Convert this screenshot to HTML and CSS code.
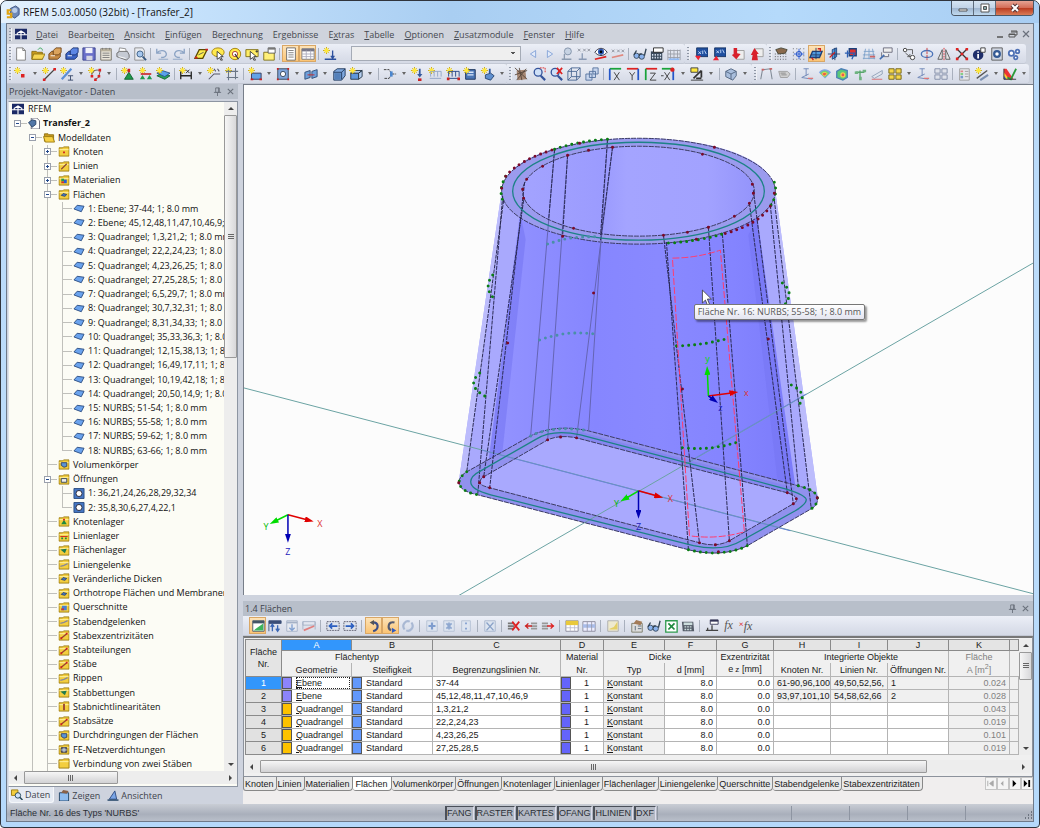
FILE: index.html
```html
<!DOCTYPE html>
<html lang="de">
<head>
<meta charset="utf-8">
<title>RFEM 5.03.0050 (32bit) - [Transfer_2]</title>
<link rel="stylesheet" href="styles.css">
</head>
<body>

<!-- icon set -->
<svg class="defs" aria-hidden="true">
<defs>
<symbol id="spark" viewBox="0 0 16 16"><path d="M4 0v8M0 4h8M1.500 1.500l5 5M6.500 1.500l-5 5" stroke="#c9a400"/><circle cx="4" cy="4" r="2.500" fill="#ffe83a"/></symbol>
<symbol id="logo" viewBox="0 0 16 16"><path fill="#1b2a66" d="M0 1h16v14H0z"/><path d="M0 9h16M8 3v12M3 9V7l5-3 5 3v2" stroke="#fff" stroke-width="1.500"/></symbol>
<symbol id="app" viewBox="0 0 16 16"><path d="M5 4l6-3 4 3v7l-5 4-5-3z" fill="#6f89b8" stroke="#3b4f7d"/><circle cx="10" cy="6" r="3" fill="#b9cbe8"/><path d="M6 6H2v4h4v4H1" stroke="#e0a414" stroke-width="2.500"/></symbol>
<symbol id="new" viewBox="0 0 16 16"><path d="M3 1h7l3 3v11H3z" fill="#fff" stroke="#777"/><path d="M10 1v3h3" stroke="#777"/></symbol>
<symbol id="open" viewBox="0 0 16 16"><path d="M1 5h5l1 1h6v8H1z" fill="#c99b1e" stroke="#866a10"/><path d="M3 8h13l-3 6H1z" fill="#f6d655" stroke="#8e7215"/><path d="M8 3c2-3 5-2 5 1" stroke="#2aa04a"/></symbol>
<symbol id="box" viewBox="0 0 16 16"><path d="M1 8l3-3h10v6l-3 3H1z" fill="#c58a45" stroke="#6b4015"/><path d="M6 4l3-3h6v5l-3 3H6z" fill="#dba35c" stroke="#6b4015"/><path d="M3 10h5" stroke="#fff"/></symbol>
<symbol id="boxblue" viewBox="0 0 16 16"><path d="M1 8l3-3h10v6l-3 3H1z" fill="#3b63c4" stroke="#152d6b"/><path d="M6 4l3-3h6v5l-3 3H6z" fill="#5c86e4" stroke="#152d6b"/><path d="M3 10h5" stroke="#fff"/></symbol>
<symbol id="save" viewBox="0 0 16 16"><path d="M1 1h14v14H1z" fill="#6a6fc9" stroke="#39408a"/><path d="M4 1h8v6H4z" fill="#f1f1fa"/><path d="M5 10h7v5H5z" fill="#d5d5e2"/></symbol>
<symbol id="report" viewBox="0 0 16 16"><path d="M2 2h12v13H2z" fill="#e9e5da" stroke="#6e6a60"/><path d="M2 2h12v3H2z" fill="#b8b09c"/><path d="M4 7h8M4 9.500h8M4 12h8M4 1v2M8 1v2M12 1v2" stroke="#777"/></symbol>
<symbol id="print" viewBox="0 0 16 16"><path d="M4 1l7 1 1 5H3z" fill="#fff" stroke="#888"/><path d="M1 7l3-2h9l2 4v3l-3 3-11-4z" fill="#c5cad3" stroke="#666"/><path d="M3 11l8 2" stroke="#fff"/></symbol>
<symbol id="preview" viewBox="0 0 16 16"><path d="M2 1h9l2 3v11H2z" fill="#e9ebf0" stroke="#888"/><circle cx="8" cy="8" r="3.500" fill="#a7c8ef" stroke="#35577f"/><path d="M11 11l4 4" stroke="#35577f" stroke-width="2"/></symbol>
<symbol id="undo" viewBox="0 0 16 16"><path d="M2 2v5h5M2 7c3-4 10-4 11 1 0 4-4 4-6 4" stroke="#8ba3c4" stroke-width="1.500"/><path d="M4 14h11" stroke="#8ba3c4"/></symbol>
<symbol id="redo" viewBox="0 0 16 16"><path d="M14 2v5H9M14 7C11 3 4 3 3 8c0 4 4 4 6 4" stroke="#8ba3c4" stroke-width="1.500"/><path d="M1 14h11" stroke="#8ba3c4"/></symbol>
<symbol id="sel-para" viewBox="0 0 16 16"><path d="M6 3h9l-5 10H1z" fill="#ffee4d" stroke="#5b4a00" stroke-width="1.500"/><path d="M5 9l6-3" stroke="#555"/><path d="M1 12h3M13 3h3" stroke="#c22" stroke-width="2"/></symbol>
<symbol id="sel-oval" viewBox="0 0 16 16"><ellipse cx="8" cy="6" rx="7" ry="5" fill="#ffe94d" stroke="#a07b00"/><path d="M7 5l7 6-3 0 2 4-2 0-1-3-3 2z" fill="#fff" stroke="#333"/></symbol>
<symbol id="sel-ring" viewBox="0 0 16 16"><circle cx="8" cy="8" r="6.500" fill="#ffe94d" stroke="#a07b00"/><circle cx="8" cy="8" r="3" fill="#fff" stroke="#a33"/><path d="M8 8l4 6" stroke="#333" stroke-width="1.500"/></symbol>
<symbol id="sel-box" viewBox="0 0 16 16"><path d="M1 3h14v8H1z" fill="#ffee66" stroke="#7c6b12"/><path d="M6 5l7 6-3 0 2 4-2 0-1-3-3 2z" fill="#fff" stroke="#333"/><path d="M12 5h3M13.500 3.500v3" stroke="#333"/></symbol>
<symbol id="sel-tab" viewBox="0 0 16 16"><path d="M2 6h12v9H2z" fill="#fff07a" stroke="#7c6b12"/><path d="M7 1h8v6H7z" fill="#fff" stroke="#555"/><path d="M7 1h8v2H7z" fill="#777"/></symbol>
<symbol id="list" viewBox="0 0 16 16"><path d="M3 1h10v14H3z" fill="#fff" stroke="#666"/><path d="M5 4h6M5 6.500h6M5 9h6M5 11.500h6" stroke="#777"/></symbol>
<symbol id="grid" viewBox="0 0 16 16"><path d="M1 2h14v12H1z" fill="#fff" stroke="#777"/><path d="M1 2h14v3H1z" fill="#778"/><path d="M6 4v10M11 4v10M1 8h14M1 11h14" stroke="#aab"/></symbol>
<symbol id="newload" viewBox="0 0 16 16"><use href="#spark"/><path d="M11 4v8M9 10l2 3 2-3M2 14h13" stroke="#2b4f9e" stroke-width="1.500"/></symbol>
<symbol id="prev" viewBox="0 0 16 16"><path d="M11 4L5 8l6 4z" fill="#e3ebf9" stroke="#7f9fd6"/></symbol>
<symbol id="next" viewBox="0 0 16 16"><path d="M5 4l6 4-6 4z" fill="#e3ebf9" stroke="#7f9fd6"/></symbol>
<symbol id="pineye" viewBox="0 0 16 16"><circle cx="9" cy="5" r="4" fill="#c7d3e3" stroke="#7d8ea5"/><path d="M5 8v6M2 14h11" stroke="#8c9bb0" stroke-width="1.500"/></symbol>
<symbol id="xxx" viewBox="0 0 16 16"><path d="M1 2l3 3M4 2L1 5M7 2l3 3M10 2L7 5M12 2l3 3M15 2l-3 3" stroke="#8a8f99"/><path d="M6 7v7M2 14h9" stroke="#8a9ab5" stroke-width="1.500"/></symbol>
<symbol id="eye" viewBox="0 0 16 16"><path d="M1 6c4-6 10-6 14 0-4 5-10 5-14 0z" fill="#fff" stroke="#223"/><circle cx="8" cy="5.500" r="3.500" fill="#2c57b4"/><circle cx="8" cy="5.500" r="1.500" fill="#000"/><path d="M1 14l13-3" stroke="#d22" stroke-width="2"/></symbol>
<symbol id="xxx2" viewBox="0 0 16 16"><path d="M1 3l3 3M4 3L1 6M7 3l3 3M10 3L7 6M12 3l3 3M15 3l-3 3" stroke="#8a8f99"/><path d="M1 12l13-3" stroke="#e08a80" stroke-width="2"/></symbol>
<symbol id="glasses" viewBox="0 0 16 16"><circle cx="4" cy="10" r="3" fill="#8bb3ee" stroke="#345"/><circle cx="10" cy="11" r="3" fill="#8bb3ee" stroke="#345"/><path d="M1 9l3-5M7 10l1-2 2 0M13 10l2-8" stroke="#345" stroke-width="1.500"/></symbol>
<symbol id="calc" viewBox="0 0 16 16"><path d="M1 5h13v10H1z" fill="#3a4a5c"/><path d="M4 1h11v5H4z" fill="#fff" stroke="#222"/><path d="M3 8v5M6 8v5M9 8v5M12 8v5" stroke="#d8e2f0" stroke-width="1.500" stroke-dasharray="2 1"/></symbol>
<symbol id="abacus" viewBox="0 0 16 16"><path d="M1 3v12M15 3v12M1 4h14M1 8h14M1 12h14M4 3v11M8 3v11M12 3v11" stroke="#9a9fa8"/><path d="M2 14h12" stroke="#8fb9f4" stroke-width="2"/></symbol>
<symbol id="scr-blue" viewBox="0 0 16 16"><path d="M3 1h13v10H3z" fill="#1f4fa0" stroke="#12305f"/><path d="M5 5l3 3M8 5L5 8M10 4v4M12 4l2 4" stroke="#cfe2ff"/><path d="M1 10l4 5 3-5z" fill="#e23"/></symbol>
<symbol id="scr-up" viewBox="0 0 16 16"><path d="M3 1h13v10H3z" fill="#1f4fa0" stroke="#12305f"/><path d="M5 4l3 3M8 4L5 7M10 3v4M12 3l2 4" stroke="#cfe2ff"/><path d="M1 15l4-5 3 5z" fill="#e23"/></symbol>
<symbol id="page-red" viewBox="0 0 16 16"><path d="M6 4h9v10H6z" fill="#eee" stroke="#999"/><path d="M3 1l4 0 0 6 4 1-5 6-5-5 2-1z" fill="#d8202c"/></symbol>
<symbol id="page-up" viewBox="0 0 16 16"><path d="M6 2h9v9H6z" fill="#eee" stroke="#999"/><path d="M5 1l5 7-2 0 1 7-7 0 1-6-2 0z" fill="#d8202c"/></symbol>
<symbol id="rast" viewBox="0 0 16 16"><path d="M1 8h15M1 11h15M1 14h15" stroke="#444" stroke-dasharray="1 2"/><path d="M2 3l6-2 7 2-2 4-8 1z" fill="#8a6a4d" stroke="#443"/></symbol>
<symbol id="rast2" viewBox="0 0 16 16"><path d="M1 2h15M1 6h15M1 10h15M1 14h15" stroke="#555" stroke-dasharray="1 3"/><circle cx="8" cy="8" r="3" fill="none" stroke="#2255d0"/><path d="M8 2v12M2 8h12" stroke="#2255d0"/></symbol>
<symbol id="plane" viewBox="0 0 16 16"><path d="M4 5h11l-3 7H1z" fill="#4f9be0" stroke="#1b3f79" stroke-width="1.500"/><path d="M8 1v13M2 9h12" stroke="#223a66"/><path d="M10 2h3v3M3 12l2 3" stroke="#c22" stroke-width="1.500"/></symbol>
<symbol id="plane2" viewBox="0 0 16 16"><path d="M6 3l5-2v10l-5 3z" fill="#4f9be0" stroke="#1b3f79"/><path d="M1 8h14M9 1v14" stroke="#223a66"/><path d="M3 12l6-6" stroke="#c22" stroke-width="1.500"/></symbol>
<symbol id="plane3" viewBox="0 0 16 16"><path d="M6 2h8v8H6z" fill="#d33" stroke="#1b3f79" stroke-width="1.500"/><path d="M1 7h11l-3 7M4 4v8" stroke="#2b5eb3" stroke-width="1.500"/></symbol>
<symbol id="fence" viewBox="0 0 16 16"><path d="M4 2L2 14M8 2v12M12 2l2 12M2 5h12M1 9h14M1 13h14" stroke="#7ba0c9"/><path d="M9 11h6" stroke="#c66" stroke-width="2"/></symbol>
<symbol id="plug" viewBox="0 0 16 16"><path d="M5 1h10v5H5zM3 6v5h8V8" fill="#eee" stroke="#667"/><path d="M1 14l5-5" stroke="#456fb0" stroke-width="2"/></symbol>
<symbol id="copy" viewBox="0 0 16 16"><circle cx="3.500" cy="3.500" r="2" fill="#fff" stroke="#333"/><circle cx="12" cy="12" r="2.500" fill="#fff" stroke="#333"/><path d="M6 3h6v5M4 7l5 4M9 8v3H6" stroke="#555"/></symbol>
<symbol id="rotate" viewBox="0 0 16 16"><ellipse cx="8" cy="8" rx="6.500" ry="4" fill="none" stroke="#4b73b8" stroke-width="1.500"/><path d="M8 1v14" stroke="#c33" stroke-dasharray="3 1"/></symbol>
<symbol id="mirror" viewBox="0 0 16 16"><path d="M6 3v11H1zM10 3v11h5z" fill="#e5e5e5" stroke="#555"/><path d="M8 1v14" stroke="#d22" stroke-dasharray="2 1"/></symbol>
<symbol id="cross" viewBox="0 0 16 16"><path d="M2 2l12 12M14 2L2 14" stroke="#333" stroke-width="1.500"/><path d="M1 1h3v3H1zM12 1h3v3h-3zM1 12h3v3H1zM12 12h3v3h-3zM6.500 6.500h3v3h-3z" fill="#d22"/></symbol>
<symbol id="info" viewBox="0 0 16 16"><circle cx="7" cy="9" r="6" fill="#1f2f6b"/><path d="M7 8v5M7 5v1.500" stroke="#fff" stroke-width="2"/><path d="M10 1h5v5h-5z" fill="#fff" stroke="#333"/></symbol>
<symbol id="photo" viewBox="0 0 16 16"><path d="M2 1h12v14H2z" fill="#cfd6e2" stroke="#555"/><circle cx="8" cy="8" r="4.500" fill="#345a94"/><circle cx="8" cy="8" r="2" fill="#fff"/></symbol>
<symbol id="gears" viewBox="0 0 16 16"><circle cx="5" cy="7" r="3" fill="#fff" stroke="#4f71b5" stroke-width="2"/><circle cx="12" cy="5" r="2" fill="#fff" stroke="#4f71b5" stroke-width="2"/><circle cx="10" cy="12" r="2" fill="#fff" stroke="#4f71b5" stroke-width="2"/></symbol>
<symbol id="node" viewBox="0 0 16 16"><use href="#spark"/><path d="M8 8h4v4H8z" fill="#d22"/></symbol>
<symbol id="line" viewBox="0 0 16 16"><use href="#spark"/><path d="M3 14L14 3" stroke="#444" stroke-width="1.500"/><path d="M1 13h3v3H1zM13 1h3v3h-3z" fill="#d22"/></symbol>
<symbol id="bar" viewBox="0 0 16 16"><use href="#spark"/><path d="M2 14L13 2" stroke="#5b8fd6" stroke-width="2.500"/><path d="M9 10h6M12 10v5M9 15h6" stroke="#346"/></symbol>
<symbol id="poly" viewBox="0 0 16 16"><use href="#spark"/><path d="M4 10c2-7 5-7 10-6l-2 8-4 2" stroke="#555"/><path d="M3 9h3v3H3zM12 2h3v3h-3zM11 9h3v3h-3zM7 13h3v3H7z" fill="#d22"/></symbol>
<symbol id="sup-node" viewBox="0 0 16 16"><use href="#spark"/><path d="M9 6l5 8H4z" fill="#1f9a4a" stroke="#0c5b28"/><path d="M9 2v4" stroke="#c22" stroke-width="3"/></symbol>
<symbol id="sup-line" viewBox="0 0 16 16"><use href="#spark"/><path d="M2 8h12" stroke="#c33" stroke-width="2"/><path d="M4 9l3 5H1zM12 9l3 5H9z" fill="#1f9a4a"/></symbol>
<symbol id="sup-face" viewBox="0 0 16 16"><path d="M1 10l6-3 9 3-6 4z" fill="#2aa35a" stroke="#12602f"/><path d="M1 7l6-3 9 3-6 4z" fill="#59a2ea" stroke="#234f86"/><use href="#spark"/></symbol>
<symbol id="dim" viewBox="0 0 16 16"><use href="#spark"/><path d="M2 5v9M14 5v9M2 10h12" stroke="#222" stroke-width="1.500"/><path d="M8 3l4 4M12 3L8 7" stroke="#222"/></symbol>
<symbol id="comment" viewBox="0 0 16 16"><use href="#spark"/><path d="M2 14l6-6h7M8 2l2 3M12 2l2 3" stroke="#556" stroke-width="1.200"/></symbol>
<symbol id="frame" viewBox="0 0 16 16"><use href="#spark"/><path d="M4 3v12M12 1v13M1 5h14M2 12h13" stroke="#6b7686" stroke-width="1.200"/></symbol>
<symbol id="face" viewBox="0 0 16 16"><path d="M4 7h11v7H4z" fill="#63a3e6" stroke="#335"/><path d="M3 13h3v2H3zM13 13h3v2h-3z" fill="#c22"/><use href="#spark"/></symbol>
<symbol id="opening" viewBox="0 0 16 16"><path d="M2 2h12v12H2z" fill="#7ea5dc" stroke="#345"/><circle cx="8" cy="8" r="3" fill="#fff" stroke="#345"/><path d="M1 1h2v2H1zM13 1h2v2h-2zM1 13h2v2H1zM13 13h2v2h-2z" fill="#c22"/></symbol>
<symbol id="cutout" viewBox="0 0 16 16"><path d="M1 6l6-2v8l-6 2zM9 5l6-2v8l-6 2z" fill="#6ea0db" stroke="#2a4874"/><path d="M4 9h8" stroke="#c22"/></symbol>
<symbol id="solid" viewBox="0 0 16 16"><path d="M2 5l4-3h9v8l-4 5H2z" fill="#7fa8de" stroke="#1d3557"/><path d="M2 6h9v8M11 6l4-4" stroke="#1d3557"/><path d="M3 7h7v7H3z" fill="#5480ba"/></symbol>
<symbol id="solid-open" viewBox="0 0 16 16"><path d="M2 7h9v7H2z" fill="#5f97da" stroke="#234"/><path d="M2 7l3-3h10l-4 3zM11 7l4-3v7l-4 3z" fill="#b5cff0" stroke="#234"/><use href="#spark"/></symbol>
<symbol id="merge" viewBox="0 0 16 16"><path d="M1 3h6l3 5-3 5H1M10 8h5" stroke="#333" stroke-dasharray="3 1"/><path d="M8 5h3v6H8z" fill="#4a86cf"/></symbol>
<symbol id="load-n" viewBox="0 0 16 16"><use href="#spark"/><path d="M10 2v8" stroke="#355a9e" stroke-width="2"/><path d="M7 8l3 4 3-4z" fill="#355a9e"/><path d="M8 13h4v3H8z" fill="#c22"/></symbol>
<symbol id="load-l" viewBox="0 0 16 16"><use href="#spark"/><path d="M2 13h13M3 5v6M7 5v6M11 5v6M15 5v6M3 5h12" stroke="#8fa2c4"/></symbol>
<symbol id="load-m" viewBox="0 0 16 16"><use href="#spark"/><path d="M2 13h13M3 5v6M7 5v6M11 5v6M15 5v6M3 5h12" stroke="#1f3f80"/><path d="M1 12h3v3H1zM13 12h3v3h-3z" fill="#c22"/></symbol>
<symbol id="load-f" viewBox="0 0 16 16"><path d="M3 3h11v11H3z" fill="#4a76b6" stroke="#122c55"/><path d="M5 6h7M5 9h7" stroke="#d9e6f8" stroke-width="1.500"/><use href="#spark"/></symbol>
<symbol id="load-s" viewBox="0 0 16 16"><use href="#spark"/><path d="M5 9l6-2 4 3-4 5-6-2z" fill="#5f8fcf" stroke="#25436e"/><path d="M10 2v5" stroke="#2a56a0" stroke-width="2"/></symbol>
<symbol id="render" viewBox="0 0 16 16"><path d="M3 4l10-1 1 11-10 1z" fill="#a58672"/><path d="M1 1l14 13M6 1l3 14M1 9l14-5M14 2L3 15" stroke="#554539"/></symbol>
<symbol id="zoomwin" viewBox="0 0 16 16"><circle cx="7" cy="6" r="4.500" fill="#cfe0f7" stroke="#34539b" stroke-width="1.500"/><path d="M10 10l5 5" stroke="#34539b" stroke-width="2.500"/><path d="M9 1h6v6" stroke="#d22" stroke-dasharray="2 1"/></symbol>
<symbol id="zoomx" viewBox="0 0 16 16"><circle cx="7" cy="6" r="4.500" fill="#cfe0f7" stroke="#34539b" stroke-width="1.500"/><path d="M10 10l5 5" stroke="#34539b" stroke-width="2.500"/><path d="M9 1l6 7M15 1L9 8" stroke="#d22" stroke-width="2"/></symbol>
<symbol id="cube" viewBox="0 0 16 16"><path d="M1 5h10v10H1zM5 1h10v10H5zM1 5l4-4M11 5l4-4M11 15l4-4M1 15l4-4" stroke="#45628f"/></symbol>
<symbol id="cubes" viewBox="0 0 16 16"><path d="M1 8h7v7H1zM5 5h7v7H5zM9 1h6v7H9z" fill="#c8d6ee" stroke="#54709d"/></symbol>
<symbol id="view-x" viewBox="0 0 16 16"><path d="M2 2h13" stroke="#19a33a" stroke-width="2"/><path d="M2 2v13" stroke="#2456c8" stroke-width="2"/><path d="M7 6l6 9M13 6l-6 9" stroke="#333"/></symbol>
<symbol id="view-y" viewBox="0 0 16 16"><path d="M1 2h13" stroke="#d22" stroke-width="2"/><path d="M14 2v13" stroke="#2456c8" stroke-width="2"/><path d="M4 6l3 4 3-4M7 10v5" stroke="#333"/></symbol>
<symbol id="view-z" viewBox="0 0 16 16"><path d="M2 2h13" stroke="#d22" stroke-width="2"/><path d="M2 2v13" stroke="#19a33a" stroke-width="2"/><path d="M7 7h6l-6 8h7" stroke="#333"/></symbol>
<symbol id="view-mx" viewBox="0 0 16 16"><path d="M1 2h13" stroke="#19a33a" stroke-width="2"/><path d="M14 2v13" stroke="#2456c8" stroke-width="2"/><path d="M4 6l6 9M10 6l-6 9M0 10h3" stroke="#333"/><circle cx="13" cy="3" r="2.500" fill="#d22"/></symbol>
<symbol id="visib" viewBox="0 0 16 16"><path d="M1 1h8v5H1z" fill="#ffe93f" stroke="#333"/><path d="M4 13L13 4M13 4v8M7 13h6" stroke="#333" stroke-width="2"/><path d="M1 15h14" stroke="#333"/></symbol>
<symbol id="shade" viewBox="0 0 16 16"><path d="M2 5l6-3 6 3v5l-4 5-8-4z" fill="#a9bedd" stroke="#4e617d"/><path d="M2 5l6 3 6-3M8 8v6" stroke="#4e617d"/></symbol>
<symbol id="def" viewBox="0 0 16 16"><path d="M2 14L4 3l9-1 2 12" stroke="#7f8894" stroke-width="1.200"/><path d="M3 3h3M12 2h3" stroke="#c66" stroke-width="2"/></symbol>
<symbol id="label" viewBox="0 0 16 16"><path d="M2 5h10l3 3-3 4H4z" fill="#cfcfcf" stroke="#9b9b9b"/><path d="M4 7h6M5 9h6" stroke="#888"/></symbol>
<symbol id="res-bar" viewBox="0 0 16 16"><path d="M4 2h6M7 2v8M2 12l12 2M2 12l8-4" stroke="#6b84b5"/><path d="M9 13h6" stroke="#d77" stroke-width="1.500"/></symbol>
<symbol id="res-face" viewBox="0 0 16 16"><path d="M1 6c4-5 10-4 14 0l-7 7z" fill="#7fa3e8"/><path d="M2 7c4-4 8-4 11 0l-5 5z" fill="#72d07a"/><path d="M4 8c2-3 5-3 7 0l-4 3z" fill="#f2d24c"/><path d="M5 8c2-2 3-2 5 0l-3 2z" fill="#e8604c"/></symbol>
<symbol id="res-solid" viewBox="0 0 16 16"><path d="M2 5l5-3 7 2v8l-5 3-7-3z" fill="#5ac878" stroke="#4b7fb6" stroke-width="1.500"/><circle cx="9" cy="9" r="3" fill="#f0cf4b"/><circle cx="9" cy="9" r="1.500" fill="#e55"/></symbol>
<symbol id="res-sup" viewBox="0 0 16 16"><path d="M8 4v10M3 6h10" stroke="#57a56b" stroke-width="1.500"/><path d="M2 5h4v3H2zM11 3h4v3h-4zM7 11h3v4H7z" fill="#6fb480"/></symbol>
<symbol id="res-line" viewBox="0 0 16 16"><path d="M2 11l12-7v4L5 13z" fill="#dfe5ee" stroke="#8e9eb6"/><path d="M2 14h12" stroke="#d66"/></symbol>
<symbol id="yfour" viewBox="0 0 16 16"><path d="M1 2h6v5H1zM9 2h6v5H9zM1 9h6v5H1zM9 9h6v5H9z" fill="#f5d74a" stroke="#6d5c10"/></symbol>
<symbol id="gfour" viewBox="0 0 16 16"><path d="M1 2h6v5H1zM9 2h6v5H9zM1 9h6v5H1zM9 9h6v5H9z" fill="#dfe2ea" stroke="#7f8aa5"/></symbol>
<symbol id="panel" viewBox="0 0 16 16"><path d="M3 2h11v13H3z" fill="#e4e6ea" stroke="#999"/><path d="M4 4h3v2H4z" fill="#d88"/><path d="M4 7h3v2H4z" fill="#7c7"/><path d="M4 10h3v3H4z" fill="#79c"/><path d="M9 5h4M9 8h4M9 11h4" stroke="#999"/></symbol>
<symbol id="tools" viewBox="0 0 16 16"><use href="#spark"/><path d="M2 13l12-9" stroke="#555" stroke-width="1.500"/><path d="M6 15l9-6" stroke="#7b8fb0" stroke-width="2.500"/></symbol>
<symbol id="palette" viewBox="0 0 16 16"><path d="M1 2h3l8 12H1z" fill="#e33"/><path d="M1 6l6 8H1z" fill="#fc3"/><path d="M1 10l3 4H1z" fill="#36c"/><path d="M5 12l4 2 6-12" stroke="#2c9a3a" stroke-width="2"/><path d="M1 2v12h14" stroke="#333"/></symbol>
<!-- table toolbar -->
<symbol id="t-edit" viewBox="0 0 16 16"><path d="M2 2h13v12H2z" fill="#fff" stroke="#456"/><path d="M2 2h13v3H2z" fill="#456"/><path d="M3 13L14 5v8z" fill="#3fb55c"/></symbol>
<symbol id="t-in" viewBox="0 0 16 16"><path d="M1 2h14v3H1zM1 5v9" fill="#3c4f77" stroke="#3c4f77"/><path d="M5 14V7M3 9l2-3 2 3M11 7v7M9 11l2 3 2-3" stroke="#3a66b4" stroke-width="1.500"/></symbol>
<symbol id="t-down" viewBox="0 0 16 16"><path d="M2 2h12v12H2z" fill="#e7eaf1" stroke="#a5b1c6"/><path d="M2 4h12" stroke="#a5b1c6" stroke-width="2"/><path d="M8 6v7M5 10l3 3 3-3" stroke="#7f9fd0" stroke-width="1.500"/></symbol>
<symbol id="t-lin" viewBox="0 0 16 16"><path d="M1 3h14v4H1zM1 3v9M15 3v9" stroke="#a5b1c6"/><path d="M2 13l12-5" stroke="#e08080" stroke-width="2"/></symbol>
<symbol id="t-left" viewBox="0 0 16 16"><path d="M1 3h14v10H1z" fill="#dfe4ee" stroke="#556" stroke-dasharray="2 1"/><path d="M13 8H4M7 5L4 8l3 3" stroke="#2d5fc0" stroke-width="2"/></symbol>
<symbol id="t-right" viewBox="0 0 16 16"><path d="M1 3h14v10H1z" fill="#dfe4ee" stroke="#556" stroke-dasharray="2 1"/><path d="M3 8h9M9 5l3 3-3 3" stroke="#2d5fc0" stroke-width="2"/></symbol>
<symbol id="t-cw" viewBox="0 0 16 16"><path d="M6 4c8-1 8 8 1 10" stroke="#3d4f86" stroke-width="2.500"/><path d="M8 1v6L3 4z" fill="#555"/></symbol>
<symbol id="t-ccw" viewBox="0 0 16 16"><path d="M12 4C4 2 4 11 8 13" stroke="#555a6e" stroke-width="2.500"/><path d="M9 10v6l5-3z" fill="#2f5ac0"/></symbol>
<symbol id="t-sync" viewBox="0 0 16 16"><path d="M4 12C0 6 6 1 10 3M12 4c4 6-2 11-6 9" stroke="#a9b8d3" stroke-width="2.500"/></symbol>
<symbol id="t-plus" viewBox="0 0 16 16"><path d="M2 2h12v12H2z" fill="#dde4f0" stroke="#b5c0d3"/><path d="M8 4v8M4 8h8" stroke="#7f9dce" stroke-width="2.500"/></symbol>
<symbol id="t-mul" viewBox="0 0 16 16"><path d="M2 2h12v12H2z" fill="#dde4f0" stroke="#b5c0d3"/><path d="M5 5l6 6M11 5l-6 6M8 4v8" stroke="#8fa8d0" stroke-width="2"/></symbol>
<symbol id="t-div" viewBox="0 0 16 16"><path d="M3 2h10v12H3z" fill="#dde4f0" stroke="#b5c0d3"/><path d="M7 4h2v2H7zM7 10h2v2H7z" fill="#7f9dce"/></symbol>
<symbol id="t-x" viewBox="0 0 16 16"><path d="M2 2h12v12H2z" fill="#dde4f0" stroke="#a8b5cc"/><path d="M4 4l8 9M12 4l-8 9" stroke="#8aa2c8" stroke-width="1.500"/></symbol>
<symbol id="t-delrow" viewBox="0 0 16 16"><path d="M1 5h7M1 8h7M1 11h7" stroke="#777" stroke-width="2"/><path d="M6 3l8 10M14 3L6 13" stroke="#d22" stroke-width="2"/></symbol>
<symbol id="t-insl" viewBox="0 0 16 16"><path d="M8 5h7M8 8h7M8 11h7" stroke="#999" stroke-width="2"/><path d="M1 8h8M5 5L2 8l3 3" stroke="#c22" stroke-width="1.500"/></symbol>
<symbol id="t-insr" viewBox="0 0 16 16"><path d="M1 5h7M1 8h7M1 11h7" stroke="#999" stroke-width="2"/><path d="M7 8h8M11 5l3 3-3 3" stroke="#d22" stroke-width="1.500"/></symbol>
<symbol id="t-yel" viewBox="0 0 16 16"><path d="M1 2h14v12H1z" fill="#fff" stroke="#889"/><path d="M1 2h14v5H1z" fill="#e9c93b"/><path d="M6 7v7M11 7v7M1 10h14" stroke="#bbc"/></symbol>
<symbol id="t-blue" viewBox="0 0 16 16"><path d="M1 3h14v11H1z" fill="#eef" stroke="#889"/><path d="M1 6h14v4H1z" fill="#a9bce9"/><path d="M6 3v11M11 3v11" stroke="#99a"/></symbol>
<symbol id="t-note" viewBox="0 0 16 16"><path d="M2 2h12v12H2z" fill="#eee9cf" stroke="#aaa"/><path d="M4 11l5-2 4-6v9H4z" fill="#e4cf66"/></symbol>
<symbol id="t-info" viewBox="0 0 16 16"><path d="M2 5h12v10H2z" fill="#ddd" stroke="#776"/><path d="M4 5l3-4 7 2-2 4z" fill="#a37b58"/><path d="M6 8v5M9 8h4M9 11h4" stroke="#567"/></symbol>
<symbol id="t-xls" viewBox="0 0 16 16"><path d="M2 2h13v13H2z" fill="#fff" stroke="#2f9a4f" stroke-width="1.500"/><path d="M5 5l7 7M12 5l-7 7" stroke="#1f8a3f" stroke-width="2"/></symbol>
<symbol id="t-calc" viewBox="0 0 16 16"><path d="M1 3h13l1 11H2z" fill="#555c69"/><path d="M3 4h10v3H3z" fill="#cdd"/><path d="M4 9h9M4 12h9" stroke="#cdd" stroke-width="1.500" stroke-dasharray="2 1"/></symbol>
<symbol id="t-abc" viewBox="0 0 16 16"><path d="M6 1h9v5H6z" fill="#fff" stroke="#335"/><path d="M6 1h9v2H6z" fill="#335"/><path d="M1 13h14M3 10v3M8 7v6" stroke="#444" stroke-width="1.500"/></symbol>
<!-- navigator -->
<symbol id="folder" viewBox="0 0 12 12"><path d="M.5 2h4l1-1h6v10H.5z" fill="#f3ce3f" stroke="#9c7c12"/><path d="M1 4h10" stroke="#fff3a8"/></symbol>
<symbol id="openfolder" viewBox="0 0 12 12"><path d="M1 2h4l1 1h5v7H1z" fill="#c99b1e" stroke="#8e7215"/><path d="M0 5h10l2 6H2z" fill="#f6d043" stroke="#9c7c12"/></symbol>
<symbol id="doc" viewBox="0 0 12 12"><path d="M3 0h6l3 3v9H3z" fill="#fff" stroke="#667"/><path d="M0 5l4-3 4 1v4l-4 3z" fill="#5277a8" stroke="#2b4468"/></symbol>
<symbol id="f-dot" viewBox="0 0 12 12"><use href="#folder"/><path d="M5 6h2v2H5z" fill="#c22"/></symbol>
<symbol id="f-line" viewBox="0 0 12 12"><use href="#folder"/><path d="M3 9l6-6" stroke="#843" stroke-width="1.200"/></symbol>
<symbol id="f-mat" viewBox="0 0 12 12"><use href="#folder"/><path d="M3 4h3v3H3z" fill="#2a9a4a"/><path d="M6 5h3v4H6z" fill="#2b5ed0"/><path d="M3 7h3v2H3z" fill="#c33"/></symbol>
<symbol id="f-face" viewBox="0 0 12 12"><use href="#folder"/><path d="M3 7l2-2 4 1-2 2z" fill="#3f7fd6" stroke="#346"/></symbol>
<symbol id="f-vol" viewBox="0 0 12 12"><use href="#folder"/><path d="M3 4h6v4l-3 1-3-2z" fill="#5a94d6" stroke="#346"/></symbol>
<symbol id="f-open" viewBox="0 0 12 12"><use href="#folder"/><path d="M3 5h6v4H3z" fill="#eee" stroke="#345"/></symbol>
<symbol id="f-green" viewBox="0 0 12 12"><use href="#folder"/><path d="M6 4l3 5H3z" fill="#1f8a3f"/><path d="M5 3h2v2H5z" fill="#c22"/></symbol>
<symbol id="f-lsup" viewBox="0 0 12 12"><use href="#folder"/><path d="M2 6h8" stroke="#c22"/><path d="M3 7h2v2H3zM7 7h2v2H7z" fill="#1f8a3f"/></symbol>
<symbol id="f-fsup" viewBox="0 0 12 12"><use href="#folder"/><path d="M2 5l7-1-2 5z" fill="#1f7a4f"/></symbol>
<symbol id="f-bar" viewBox="0 0 12 12"><use href="#folder"/><path d="M2 8l4-1 4-2" stroke="#889" stroke-width="1.500"/></symbol>
<symbol id="f-bars" viewBox="0 0 12 12"><use href="#folder"/><path d="M3 9l6-5" stroke="#943" stroke-width="1.500"/><path d="M2 8h2v2H2zM8 3h2v2H8z" fill="#c22"/></symbol>
<symbol id="f-mix" viewBox="0 0 12 12"><use href="#folder"/><path d="M4 4h5v5H3z" fill="#4a7fd0"/><path d="M3 7h3v2H3z" fill="#c33"/></symbol>
<symbol id="f-col" viewBox="0 0 12 12"><use href="#folder"/><path d="M6 3v7" stroke="#943" stroke-width="2"/></symbol>
<symbol id="f-grid" viewBox="0 0 12 12"><use href="#folder"/><path d="M3 4h6v5H3z" fill="#778" stroke="#334"/><path d="M6 4v5M3 6.500h6" stroke="#cde"/></symbol>
<symbol id="surf" viewBox="0 0 12 12"><path d="M.5 6.500L4 2.500l7.500 1-3 6z" fill="#6aa3ee" stroke="#2c4d80"/></symbol>
<symbol id="hole" viewBox="0 0 12 12"><path d="M.5.5h11v11H.5z" fill="#4576c2" stroke="#284a80"/><circle cx="6" cy="6" r="3.300" fill="#fff" stroke="#223"/></symbol>
<symbol id="n-data" viewBox="0 0 12 12"><path d="M0 1h7v6H0z" fill="#f3ce3f" stroke="#9c7c12"/><circle cx="7" cy="7" r="3" fill="#cfe2fa" stroke="#245"/><path d="M9 9l3 3" stroke="#245" stroke-width="1.500"/></symbol>
<symbol id="n-show" viewBox="0 0 12 12"><path d="M1 3h10v9H1z" fill="#8fbcee" stroke="#246"/><path d="M3 3l2-3 6 1-2 3z" fill="#8a6248"/></symbol>
<symbol id="n-view" viewBox="0 0 12 12"><path d="M2 10L8 1l2 9z" fill="#7aa5e6" stroke="#2d4c82"/><path d="M0 11h12" stroke="#246" stroke-width="1.500"/></symbol>
<symbol id="pin" viewBox="0 0 10 10"><path d="M3 1h4v5H3zM1 6h8M5 6v4M6 1v5" stroke="#6a717c"/></symbol>
<symbol id="close" viewBox="0 0 10 10"><path d="M2 2l6 6M8 2L2 8" stroke="#6a717c" stroke-width="1.200"/></symbol>
<marker id="ar" viewBox="0 0 9 6" refX="2" refY="3" markerWidth="9" markerHeight="6" markerUnits="userSpaceOnUse" orient="auto"><path d="M0 0l9 3-9 3z" fill="context-stroke"/></marker>
</defs>
</svg>

<div class="window">
<header class="titlebar">
  <svg class="i16"><use href="#app"/></svg>
  <h1>RFEM 5.03.0050 (32bit) - [Transfer_2]</h1>
  <div class="winbtns">
    <button type="button" class="min" title="Minimieren"><svg viewBox="0 0 12 10"><path d="M2 6h8v2H2z" fill="#fff" stroke="#555"/></svg></button>
    <button type="button" class="max" title="Verkleinern"><svg viewBox="0 0 12 10"><path d="M2 1h8v8H2z" fill="#fff" stroke="#555"/><path d="M4.500 3.500h3v3h-3z" fill="#8aa" stroke="#555"/></svg></button>
    <button type="button" class="shut" title="Schließen"><svg viewBox="0 0 12 10"><path d="M3 2l6 6M9 2L3 8" stroke="#533" stroke-width="4"/><path d="M3 2l6 6M9 2L3 8" stroke="#fff" stroke-width="2"/></svg></button>
  </div>
</header>

<div class="client">
<nav class="menubar">
  <span class="grip"></span>
  <svg class="i14"><use href="#logo"/></svg>
  <a href="#"><u>D</u>atei</a>
  <a href="#">Bearbeite<u>n</u></a>
  <a href="#"><u>A</u>nsicht</a>
  <a href="#"><u>E</u>infügen</a>
  <a href="#">Be<u>r</u>echnung</a>
  <a href="#">Er<u>g</u>ebnisse</a>
  <a href="#">E<u>x</u>tras</a>
  <a href="#"><u>T</u>abelle</a>
  <a href="#"><u>O</u>ptionen</a>
  <a href="#"><u>Z</u>usatzmodule</a>
  <a href="#"><u>F</u>enster</a>
  <a href="#"><u>H</u>ilfe</a>
  <div class="mdi">
    <button type="button" title="Minimieren"><svg viewBox="0 0 10 10"><path d="M2 8h6" stroke="#555" stroke-width="1.500"/></svg></button>
    <button type="button" title="Wiederherstellen"><svg viewBox="0 0 10 10"><path d="M3 2h6v4H7M1 5h6v3H1zM3 3h6M1 5.500h6" fill="none" stroke="#555"/></svg></button>
    <button type="button" title="Schließen"><svg><use href="#close"/></svg></button>
  </div>
</nav>

<div class="toolrow">
  <div class="toolbar main">
    <span class="grip"></span>
    <button type="button" title="Neu"><svg><use href="#new"/></svg></button>
    <button type="button" title="Öffnen"><svg><use href="#open"/></svg></button>
    <button type="button" title="Projekt"><svg><use href="#box"/></svg></button>
    <button type="button" title="Blockmanager"><svg><use href="#boxblue"/></svg></button>
    <button type="button" title="Speichern"><svg><use href="#save"/></svg></button>
    <button type="button" title="Ausdruckprotokoll"><svg><use href="#report"/></svg></button>
    <button type="button" title="Drucken"><svg><use href="#print"/></svg></button>
    <button type="button" title="Seitenansicht"><svg><use href="#preview"/></svg></button>
    <span class="sep"></span>
    <button type="button" title="Rückgängig"><svg><use href="#undo"/></svg></button>
    <button type="button" title="Wiederherstellen"><svg><use href="#redo"/></svg></button>
    <span class="sep"></span>
    <button type="button" title="Auswahl Rhomboid"><svg><use href="#sel-para"/></svg></button>
    <button type="button" title="Auswahl Ellipse"><svg><use href="#sel-oval"/></svg></button>
    <button type="button" title="Auswahl Kreisring"><svg><use href="#sel-ring"/></svg></button>
    <button type="button" title="Auswahl Fenster"><svg><use href="#sel-box"/></svg></button>
    <button type="button" title="Sonderauswahl"><svg><use href="#sel-tab"/></svg></button>
    <span class="sep"></span>
    <button type="button" class="on" title="Navigator"><svg><use href="#list"/></svg></button>
    <button type="button" class="on" title="Tabellen"><svg><use href="#grid"/></svg></button>
    <span class="sep"></span>
    <button type="button" title="Neuer Lastfall"><svg><use href="#newload"/></svg></button>
    <select class="loadcase" aria-label="Lastfall"><option></option></select>
    <button type="button" title="Vorheriger"><svg><use href="#prev"/></svg></button>
    <button type="button" title="Nächster"><svg><use href="#next"/></svg></button>
    <button type="button" title="Lasten anzeigen"><svg><use href="#pineye"/></svg></button>
    <button type="button" title="Lastwerte"><svg><use href="#xxx"/></svg></button>
    <button type="button" title="Ergebnisse anzeigen"><svg><use href="#eye"/></svg></button>
    <button type="button" title="Ergebniswerte"><svg><use href="#xxx2"/></svg></button>
    <span class="sep"></span>
    <button type="button" title="Sichtbarkeit"><svg><use href="#glasses"/></svg></button>
    <button type="button" title="Berechnen"><svg><use href="#calc"/></svg></button>
    <button type="button" title="Alles berechnen"><svg><use href="#abacus"/></svg></button>
  </div>
  <div class="toolbar addons">
    <span class="grip"></span>
    <button type="button" title="Import"><svg><use href="#scr-blue"/></svg></button>
    <button type="button" title="Export"><svg><use href="#scr-up"/></svg></button>
    <button type="button" title="Datei holen"><svg><use href="#page-red"/></svg></button>
    <button type="button" title="Datei senden"><svg><use href="#page-up"/></svg></button>
  </div>
  <div class="toolbar cad">
    <span class="grip"></span>
    <button type="button" title="Raster"><svg><use href="#rast"/></svg></button>
    <button type="button" title="Fang"><svg><use href="#rast2"/></svg></button>
    <button type="button" class="on" title="Ebene XY"><svg><use href="#plane"/></svg></button>
    <button type="button" title="Ebene YZ"><svg><use href="#plane2"/></svg></button>
    <button type="button" title="Ebene XZ"><svg><use href="#plane3"/></svg></button>
    <button type="button" title="Hilfslinien"><svg><use href="#fence"/></svg></button>
    <button type="button" title="Folien"><svg><use href="#plug"/></svg></button>
    <span class="sep"></span>
    <button type="button" title="Kopieren"><svg><use href="#copy"/></svg></button>
    <button type="button" title="Drehen"><svg><use href="#rotate"/></svg></button>
    <button type="button" title="Spiegeln"><svg><use href="#mirror"/></svg></button>
    <button type="button" title="Verbinden"><svg><use href="#cross"/></svg></button>
    <button type="button" title="Info"><svg><use href="#info"/></svg></button>
    <button type="button" title="Kontrolle"><svg><use href="#photo"/></svg></button>
    <button type="button" title="Einstellungen"><svg><use href="#gears"/></svg></button>
  </div>
</div>

<div class="toolrow">
  <div class="toolbar insert">
    <span class="grip"></span>
    <button type="button" title="Knoten"><svg><use href="#node"/></svg></button><button type="button" class="drop" title="Knoten wählen"></button>
    <button type="button" title="Linie"><svg><use href="#line"/></svg></button>
    <button type="button" title="Stab"><svg><use href="#bar"/></svg></button><button type="button" class="drop" title="Stab wählen"></button>
    <button type="button" title="Polylinie"><svg><use href="#poly"/></svg></button><button type="button" class="drop" title="Linie wählen"></button>
    <span class="sep"></span>
    <button type="button" title="Knotenlager"><svg><use href="#sup-node"/></svg></button>
    <button type="button" title="Linienlager"><svg><use href="#sup-line"/></svg></button>
    <button type="button" title="Flächenlager"><svg><use href="#sup-face"/></svg></button>
    <span class="sep"></span>
    <button type="button" title="Bemaßung"><svg><use href="#dim"/></svg></button><button type="button" class="drop" title="Bemaßung wählen"></button>
    <button type="button" title="Kommentar"><svg><use href="#comment"/></svg></button>
    <button type="button" title="Linienraster"><svg><use href="#frame"/></svg></button>
    <span class="sep"></span>
    <button type="button" title="Fläche"><svg><use href="#face"/></svg></button><button type="button" class="drop" title="Fläche wählen"></button>
    <button type="button" title="Öffnung"><svg><use href="#opening"/></svg></button><button type="button" class="drop" title="Öffnung wählen"></button>
    <button type="button" title="Durchdringung"><svg><use href="#cutout"/></svg></button><button type="button" class="drop" title="Durchdringung wählen"></button>
    <button type="button" title="Volumen"><svg><use href="#solid"/></svg></button>
    <button type="button" title="Quader"><svg><use href="#solid-open"/></svg></button><button type="button" class="drop" title="Volumen wählen"></button>
    <span class="sep"></span>
    <button type="button" title="Kombination"><svg><use href="#merge"/></svg></button><button type="button" class="drop" title="Kombination wählen"></button>
    <button type="button" title="Knotenlast"><svg><use href="#load-n"/></svg></button>
    <button type="button" title="Linienlast"><svg><use href="#load-l"/></svg></button>
    <button type="button" title="Stablast"><svg><use href="#load-m"/></svg></button>
    <button type="button" title="Flächenlast"><svg><use href="#load-f"/></svg></button>
    <button type="button" title="Volumenlast"><svg><use href="#load-s"/></svg></button><button type="button" class="drop" title="Last wählen"></button>
  </div>
  <div class="toolbar view">
    <span class="grip"></span>
    <button type="button" title="Rendern"><svg><use href="#render"/></svg></button>
    <button type="button" title="Zoom Fenster"><svg><use href="#zoomwin"/></svg></button>
    <button type="button" title="Zoom alles"><svg><use href="#zoomx"/></svg></button>
    <button type="button" title="Isometrie"><svg><use href="#cube"/></svg></button>
    <button type="button" title="Vorige Ansicht"><svg><use href="#cubes"/></svg></button>
    <span class="sep"></span>
    <button type="button" title="Ansicht X"><svg><use href="#view-x"/></svg></button>
    <button type="button" title="Ansicht Y"><svg><use href="#view-y"/></svg></button>
    <button type="button" title="Ansicht Z"><svg><use href="#view-z"/></svg></button>
    <button type="button" title="Ansicht -X"><svg><use href="#view-mx"/></svg></button><button type="button" class="drop" title="Ansicht wählen"></button>
    <button type="button" title="Sichtbarkeiten"><svg><use href="#visib"/></svg></button><button type="button" class="drop" title="Sichtbarkeit wählen"></button>
    <span class="sep"></span>
    <button type="button" title="Darstellung"><svg><use href="#shade"/></svg></button><button type="button" class="drop" title="Darstellung wählen"></button>
  </div>
  <div class="toolbar results">
    <span class="grip"></span>
    <button type="button" title="Verformung"><svg><use href="#def"/></svg></button>
    <button type="button" title="Werte"><svg><use href="#label"/></svg></button>
    <span class="sep"></span>
    <button type="button" title="Stäbe"><svg><use href="#res-bar"/></svg></button>
    <button type="button" title="Flächen"><svg><use href="#res-face"/></svg></button>
    <button type="button" title="Volumen"><svg><use href="#res-solid"/></svg></button>
    <button type="button" title="Lagerkräfte"><svg><use href="#res-sup"/></svg></button>
    <button type="button" title="Schnitte"><svg><use href="#res-line"/></svg></button>
    <button type="button" title="Fenster"><svg><use href="#yfour"/></svg></button><button type="button" class="drop" title="Fenster wählen"></button>
    <button type="button" title="Verlauf"><svg><use href="#res-bar"/></svg></button>
    <button type="button" title="Anordnen"><svg><use href="#gfour"/></svg></button>
    <span class="sep"></span>
    <button type="button" title="Panel"><svg><use href="#panel"/></svg></button>
    <button type="button" title="Werkzeuge"><svg><use href="#tools"/></svg></button><button type="button" class="drop" title="Werkzeug wählen"></button>
    <button type="button" title="Farben"><svg><use href="#palette"/></svg></button><button type="button" class="drop" title="Farbe wählen"></button>
  </div>
</div>

<div class="work">
<aside class="navigator">
  <div class="panelhead"><h2>Projekt-Navigator - Daten</h2>
    <button type="button" title="Anheften"><svg><use href="#pin"/></svg></button><button type="button" title="Schließen"><svg><use href="#close"/></svg></button></div>
  <div class="treebox">
    <div class="treeview">
    <ul class="tree">
      <li class="l0"><svg class="wide"><use href="#logo"/></svg>RFEM</li>
      <li class="l1 bold"><button type="button" class="exp" title="Zuklappen"></button><svg><use href="#doc"/></svg>Transfer_2</li>
      <li class="l2"><button type="button" class="exp" title="Zuklappen"></button><svg><use href="#openfolder"/></svg>Modelldaten</li>
      <li class="l3"><button type="button" class="exp plus" title="Aufklappen"></button><svg><use href="#f-dot"/></svg>Knoten</li>
      <li class="l3"><button type="button" class="exp plus" title="Aufklappen"></button><svg><use href="#f-line"/></svg>Linien</li>
      <li class="l3"><button type="button" class="exp plus" title="Aufklappen"></button><svg><use href="#f-mat"/></svg>Materialien</li>
      <li class="l3"><button type="button" class="exp" title="Zuklappen"></button><svg><use href="#f-face"/></svg>Flächen</li>
      <li class="l4"><i></i><svg><use href="#surf"/></svg>1: Ebene; 37-44; 1; 8.0 mm</li>
      <li class="l4"><i></i><svg><use href="#surf"/></svg>2: Ebene; 45,12,48,11,47,10,46,9; 1; 8.0 mm</li>
      <li class="l4"><i></i><svg><use href="#surf"/></svg>3: Quadrangel; 1,3,21,2; 1; 8.0 mm</li>
      <li class="l4"><i></i><svg><use href="#surf"/></svg>4: Quadrangel; 22,2,24,23; 1; 8.0 mm</li>
      <li class="l4"><i></i><svg><use href="#surf"/></svg>5: Quadrangel; 4,23,26,25; 1; 8.0 mm</li>
      <li class="l4"><i></i><svg><use href="#surf"/></svg>6: Quadrangel; 27,25,28,5; 1; 8.0 mm</li>
      <li class="l4"><i></i><svg><use href="#surf"/></svg>7: Quadrangel; 6,5,29,7; 1; 8.0 mm</li>
      <li class="l4"><i></i><svg><use href="#surf"/></svg>8: Quadrangel; 30,7,32,31; 1; 8.0 mm</li>
      <li class="l4"><i></i><svg><use href="#surf"/></svg>9: Quadrangel; 8,31,34,33; 1; 8.0 mm</li>
      <li class="l4"><i></i><svg><use href="#surf"/></svg>10: Quadrangel; 35,33,36,3; 1; 8.0 mm</li>
      <li class="l4"><i></i><svg><use href="#surf"/></svg>11: Quadrangel; 12,15,38,13; 1; 8.0 mm</li>
      <li class="l4"><i></i><svg><use href="#surf"/></svg>12: Quadrangel; 16,49,17,11; 1; 8.0 mm</li>
      <li class="l4"><i></i><svg><use href="#surf"/></svg>13: Quadrangel; 10,19,42,18; 1; 8.0 mm</li>
      <li class="l4"><i></i><svg><use href="#surf"/></svg>14: Quadrangel; 20,50,14,9; 1; 8.0 mm</li>
      <li class="l4"><i></i><svg><use href="#surf"/></svg>15: NURBS; 51-54; 1; 8.0 mm</li>
      <li class="l4"><i></i><svg><use href="#surf"/></svg>16: NURBS; 55-58; 1; 8.0 mm</li>
      <li class="l4"><i></i><svg><use href="#surf"/></svg>17: NURBS; 59-62; 1; 8.0 mm</li>
      <li class="l4 last"><i></i><svg><use href="#surf"/></svg>18: NURBS; 63-66; 1; 8.0 mm</li>
      <li class="l3"><i></i><svg><use href="#f-vol"/></svg>Volumenkörper</li>
      <li class="l3"><button type="button" class="exp" title="Zuklappen"></button><svg><use href="#f-open"/></svg>Öffnungen</li>
      <li class="l4"><i></i><svg><use href="#hole"/></svg>1: 36,21,24,26,28,29,32,34</li>
      <li class="l4 last"><i></i><svg><use href="#hole"/></svg>2: 35,8,30,6,27,4,22,1</li>
      <li class="l3"><i></i><svg><use href="#f-green"/></svg>Knotenlager</li>
      <li class="l3"><i></i><svg><use href="#f-lsup"/></svg>Linienlager</li>
      <li class="l3"><i></i><svg><use href="#f-fsup"/></svg>Flächenlager</li>
      <li class="l3"><i></i><svg><use href="#f-bar"/></svg>Liniengelenke</li>
      <li class="l3"><i></i><svg><use href="#f-face"/></svg>Veränderliche Dicken</li>
      <li class="l3"><i></i><svg><use href="#f-face"/></svg>Orthotrope Flächen und Membranen</li>
      <li class="l3"><i></i><svg><use href="#f-mix"/></svg>Querschnitte</li>
      <li class="l3"><i></i><svg><use href="#f-bar"/></svg>Stabendgelenken</li>
      <li class="l3"><i></i><svg><use href="#f-bars"/></svg>Stabexzentrizitäten</li>
      <li class="l3"><i></i><svg><use href="#f-bars"/></svg>Stabteilungen</li>
      <li class="l3"><i></i><svg><use href="#f-bars"/></svg>Stäbe</li>
      <li class="l3"><i></i><svg><use href="#f-bar"/></svg>Rippen</li>
      <li class="l3"><i></i><svg><use href="#f-fsup"/></svg>Stabbettungen</li>
      <li class="l3"><i></i><svg><use href="#f-col"/></svg>Stabnichtlinearitäten</li>
      <li class="l3"><i></i><svg><use href="#f-bars"/></svg>Stabsätze</li>
      <li class="l3"><i></i><svg><use href="#f-vol"/></svg>Durchdringungen der Flächen</li>
      <li class="l3"><i></i><svg><use href="#f-grid"/></svg>FE-Netzverdichtungen</li>
      <li class="l3"><i></i><svg><use href="#folder"/></svg>Verbindung von zwei Stäben</li>
    </ul>
    <div class="vscroll"><button type="button" class="up" title="Nach oben"></button><div class="thumb treethumb"></div><button type="button" class="down" title="Nach unten"></button></div>
    </div>
    <div class="hscroll"><button type="button" class="back" title="Nach links"></button><div class="thumb navthumb"></div><button type="button" class="fwd" title="Nach rechts"></button></div>
  </div>
  <div class="navtabs">
    <button type="button" class="cur"><svg><use href="#n-data"/></svg>Daten</button>
    <button type="button"><svg><use href="#n-show"/></svg>Zeigen</button>
    <button type="button"><svg><use href="#n-view"/></svg>Ansichten</button>
  </div>
</aside>

<main>
<section class="model">
<svg class="scene" viewBox="243 84 790 512" preserveAspectRatio="xMidYMid slice" role="img" aria-label="Flächenmodell">
  <defs>
    <linearGradient id="wall" x1="0" x2="1"><stop offset="0" stop-color="#9494ff"/><stop offset=".35" stop-color="#8686ff"/><stop offset=".55" stop-color="#8989ff"/><stop offset=".8" stop-color="#8484ff"/><stop offset="1" stop-color="#7b7bfa"/></linearGradient>
    <linearGradient id="mouth" x1="0" x2="1"><stop offset="0" stop-color="#a3a3ff"/><stop offset=".35" stop-color="#9b9bfe"/><stop offset=".45" stop-color="#a4a4ff"/><stop offset=".8" stop-color="#a2a2ff"/><stop offset="1" stop-color="#9494fb"/></linearGradient>
  </defs>
  <path d="M501 191L458 482C459 489 464 492 477 495L688 550C708 555 728 555 747 546L811 509C818 505 819 499 817 494L775 191C770 120 506 120 501 191z" fill="#a9a9fd"/>
  <path d="M501 191L458 482l8-10 37-265zM775 191l42 303-8-4-35-285z" fill="#bcbcfc"/>
  <path d="M522 191L487 470 546 434C556 429 570 428 588 431L795 486 753 191z" fill="url(#wall)"/>
  <path d="M520 215l-33 252 14-8 24-220zM757 215l34 268-14-4-29-244z" fill="#7676f4" opacity=".6"/>
  <path d="M458 482C459 478 461 475 466 472L530 436C546 428 566 426 588 431L798 486C812 490 817 494 817 498 818 503 815 507 811 509L747 546C728 555 708 555 688 550L477 495C464 492 459 489 458 482z" fill="#9191ee"/>
  <path d="M546 436C556 429 576 430 588 434L795 488 790 494 576 438z" fill="#8686f0"/>
  <path d="M479 483C480 479 481 478 483 477L547 440C556 436 566 436 576 438L787 493C799 497 798 501 793 504L729 541C720 546 709 546 699 543L489 488C482 486 480 485 479 483z" fill="#a9a9fe"/>
  <ellipse cx="638" cy="191" rx="137" ry="53" fill="#9b9bee"/>
  <ellipse cx="638" cy="191" rx="116" ry="45" fill="url(#mouth)"/>
  <path d="M243 388L1033 594M456 597L1033 263" class="axisline"/>
  <path d="M690 461L806 394M480 450L790 531" stroke="#6a86d6"/>

  <g class="edge">
    <ellipse cx="638" cy="191" rx="137" ry="53"/><ellipse cx="638" cy="191" rx="116" ry="45"/>
    <path d="M458 482C459 478 461 475 466 472L530 436C546 428 566 426 588 431L798 486C812 490 817 494 817 498 818 503 815 507 811 509L747 546C728 555 708 555 688 550L477 495C464 492 459 489 458 482z"/>
    <path d="M479 483C480 479 481 478 483 477L547 440C556 436 566 436 576 438L787 493C799 497 798 501 793 504L729 541C720 546 709 546 699 543L489 488C482 486 480 485 479 483z"/>
  </g>
  <path class="hidden" d="M554 149L530 436M567 155L547 440M607 139L588 431M612 147L576 438"/>
  <path class="solidline" d="M503 200L466 472M502 196L477 495M523 200L483 477M524 182L489 488M663 235L699 543M666 242L688 550M708 227L729 541M722 234L747 546M749 203L787 493M753 190L793 504M770 205L798 486M774 200L811 509M554 149L548 220M567 155L562 236M607 139L600 235M612 147L600 240"/>
  <ellipse cx="638" cy="191" rx="126" ry="49" class="teal"/>
  <path class="teal" d="M470 482C470 477 474 474 480 471L536 439C547 432 562 431 580 435L785 489C800 493 806 498 806 500 806 504 800 508 795 511L741 541C728 549 712 550 693 546L490 495C478 492 470 488 470 482z"/>
  <path class="dots faint" d="M547 244Q570 235 600 237M539 340Q567 330 594 334M530 436Q553 425 588 431"/>
  <path class="dots" d="M492 275Q482 288 494 299M479 373Q464 386 486 397M782 283Q794 292 785 304M791 385Q810 394 796 408M676 346Q705 345 729 338M682 448Q710 451 738 442M668 243Q698 241 722 234M554 149Q576 141 607 139M505 176Q497 191 503 202M774 182Q778 194 770 206M466 472Q454 481 461 488 466 493 477 495M798 486Q819 491 817 500 816 506 811 509M688 550Q722 558 747 546"/>
  <path class="dots red" d="M505 176Q518 160 554 149M770 206Q758 225 722 234"/>
  <path class="knots" d="M579 143h0M714 147h0M588 150h0M702 154h0M567 155h0M542 166h0M526 179h0M522 189h0M523 198h0M501 188h0M774 193h0M612 147h0M752 184h0M753 193h0M749 203h0M734 216h0M708 227h0M687 232h0M663 235h0M573 228h0M562 236h0M696 239h0M593 293h0M507 343h0M682 389h0M768 339h0M483 477h0M479 483h0M489 488h0M560 437h0M576 438h0M547 440h0M787 493h0M796 499h0M793 504h0M729 541h0M715 545h0M699 543h0M718 552h0M458 483h0M817 498h0"/>
  <path class="pick" d="M672 258Q696 258 720 250L744 532Q717 540 689 536z"/>
  <g class="axes" stroke="#e00000"><path d="M638 491L656 496"/><path d="M708 396L731 393"/><path d="M287 515L306 520"/></g>
  <g class="axes" stroke="#00dc00"><path d="M638 491L626 498"/><path d="M708 396L707 373"/><path d="M287 515L275 521"/></g>
  <g class="axes" stroke="#0000b4"><path d="M638 491V512"/><path d="M708 396L712 399"/><path d="M287 515V536"/></g>
  <g class="axisname">
    <text x="670" y="502" fill="#d33">X</text><text x="616" y="507" fill="#0b0">Y</text><text x="638" y="530" fill="#22b">Z</text>
    <text x="746" y="396" fill="#d33">x</text><text x="707" y="362" fill="#0d0">y</text><text x="720" y="411" fill="#22b">z</text>
    <text x="319" y="527" fill="#d33">X</text><text x="265" y="530" fill="#0b0">Y</text><text x="287" y="555" fill="#22b">Z</text>
  </g>
  <path d="M702 290v13l3-3 2 5 2-1-2-5h4z" fill="#fff" stroke="#333" stroke-width=".8"/>
</svg>
<div class="tooltip">Fläche Nr. 16: NURBS; 55-58; 1; 8.0 mm</div>
</section>

<section class="tablepane">
  <div class="panelhead"><h2>1.4 Flächen</h2>
    <button type="button" title="Anheften"><svg><use href="#pin"/></svg></button><button type="button" title="Schließen"><svg><use href="#close"/></svg></button></div>
  <div class="toolbar tabletools">
    <button type="button" class="on" title="Bearbeiten"><svg><use href="#t-edit"/></svg></button>
    <button type="button" title="Sortieren"><svg><use href="#t-in"/></svg></button>
    <button type="button" title="Füllen"><svg><use href="#t-down"/></svg></button>
    <button type="button" title="Interpolieren"><svg><use href="#t-lin"/></svg></button>
    <span class="sep"></span>
    <button type="button" title="Vorige Tabelle"><svg><use href="#t-left"/></svg></button>
    <button type="button" title="Nächste Tabelle"><svg><use href="#t-right"/></svg></button>
    <span class="sep"></span>
    <button type="button" class="on" title="Auswahl aus Grafik"><svg><use href="#t-cw"/></svg></button>
    <button type="button" class="on" title="Auswahl in Grafik"><svg><use href="#t-ccw"/></svg></button>
    <button type="button" title="Synchronisieren"><svg><use href="#t-sync"/></svg></button>
    <span class="sep"></span>
    <button type="button" title="Addieren"><svg><use href="#t-plus"/></svg></button>
    <button type="button" title="Multiplizieren"><svg><use href="#t-mul"/></svg></button>
    <button type="button" title="Dividieren"><svg><use href="#t-div"/></svg></button>
    <span class="sep"></span>
    <button type="button" title="Leeren"><svg><use href="#t-x"/></svg></button>
    <span class="sep"></span>
    <button type="button" title="Zeile löschen"><svg><use href="#t-delrow"/></svg></button>
    <button type="button" title="Zeile einfügen"><svg><use href="#t-insl"/></svg></button>
    <button type="button" title="Zeile anfügen"><svg><use href="#t-insr"/></svg></button>
    <span class="sep"></span>
    <button type="button" title="Kopfzeile"><svg><use href="#t-yel"/></svg></button>
    <button type="button" title="Spalten"><svg><use href="#t-blue"/></svg></button>
    <span class="sep"></span>
    <button type="button" title="Farbskala"><svg><use href="#t-note"/></svg></button>
    <span class="sep"></span>
    <button type="button" title="Eigenschaften"><svg><use href="#t-info"/></svg></button>
    <button type="button" title="Ansehen"><svg><use href="#glasses"/></svg></button>
    <button type="button" title="Excel"><svg><use href="#t-xls"/></svg></button>
    <button type="button" title="Rechner"><svg><use href="#t-calc"/></svg></button>
    <span class="sep"></span>
    <button type="button" title="Parameter"><svg><use href="#t-abc"/></svg></button>
    <button type="button" class="fx" title="Formel">fx</button>
    <button type="button" class="fx" title="Formel entfernen"><b>×</b>fx</button>
  </div>
  <div class="sheet">
   <div class="sheetbody">
    <table>
      <colgroup><col class="c0"><col class="ca"><col class="cb"><col class="cc"><col class="cd"><col class="ce"><col class="cf"><col class="cg"><col class="ch"><col class="ci"><col class="cj"><col class="ck"><col class="cl"></colgroup>
      <thead>
        <tr class="letters"><th rowspan="3" class="corner">Fläche<br>Nr.</th><th class="sel">A</th><th>B</th><th>C</th><th>D</th><th>E</th><th>F</th><th>G</th><th>H</th><th>I</th><th>J</th><th>K</th><th></th></tr>
        <tr><th colspan="2">Flächentyp</th><th></th><th>Material</th><th colspan="2">Dicke</th><th>Exzentrizität</th><th colspan="3">Integrierte Objekte</th><th class="ro">Fläche</th><th></th></tr>
        <tr><th>Geometrie</th><th>Steifigkeit</th><th>Begrenzungslinien Nr.</th><th>Nr.</th><th>Typ</th><th>d [mm]</th><th>e<small> z</small> [mm]</th><th>Knoten Nr.</th><th>Linien Nr.</th><th>Öffnungen Nr.</th><th class="ro">A [m<sup>2</sup>]</th><th></th></tr>
      </thead>
      <tbody>
        <tr><th class="sel">1</th><td class="col violet focus"><span><u>E</u>bene</span></td><td class="col blue">Standard</td><td>37-44</td><td class="col mat">1</td><td class="g"><u>K</u>onstant</td><td class="n">8.0</td><td class="n">0.0</td><td class="g">61-90,96,100</td><td class="g">49,50,52,56,</td><td class="g">1</td><td class="g n ro">0.024</td><td class="g"></td></tr>
        <tr><th>2</th><td class="col violet"><u>E</u>bene</td><td class="col blue">Standard</td><td>45,12,48,11,47,10,46,9</td><td class="col mat">1</td><td class="g"><u>K</u>onstant</td><td class="n">8.0</td><td class="n">0.0</td><td class="g">93,97,101,10</td><td class="g">54,58,62,66</td><td class="g">2</td><td class="g n ro">0.028</td><td class="g"></td></tr>
        <tr><th>3</th><td class="col gold"><u>Q</u>uadrangel</td><td class="col blue">Standard</td><td>1,3,21,2</td><td class="col mat">1</td><td class="g"><u>K</u>onstant</td><td class="n">8.0</td><td class="n">0.0</td><td></td><td></td><td></td><td class="g n ro">0.043</td><td class="g"></td></tr>
        <tr><th>4</th><td class="col gold"><u>Q</u>uadrangel</td><td class="col blue">Standard</td><td>22,2,24,23</td><td class="col mat">1</td><td class="g"><u>K</u>onstant</td><td class="n">8.0</td><td class="n">0.0</td><td></td><td></td><td></td><td class="g n ro">0.019</td><td class="g"></td></tr>
        <tr><th>5</th><td class="col gold"><u>Q</u>uadrangel</td><td class="col blue">Standard</td><td>4,23,26,25</td><td class="col mat">1</td><td class="g"><u>K</u>onstant</td><td class="n">8.0</td><td class="n">0.0</td><td></td><td></td><td></td><td class="g n ro">0.101</td><td class="g"></td></tr>
        <tr><th>6</th><td class="col gold"><u>Q</u>uadrangel</td><td class="col blue">Standard</td><td>27,25,28,5</td><td class="col mat">1</td><td class="g"><u>K</u>onstant</td><td class="n">8.0</td><td class="n">0.0</td><td></td><td></td><td></td><td class="g n ro">0.019</td><td class="g"></td></tr>
      </tbody>
    </table>
    <div class="vscroll"><button type="button" class="up" title="Nach oben"></button><div class="thumb sheetthumb"></div><button type="button" class="down" title="Nach unten"></button></div>
   </div>
   <div class="hscroll"><button type="button" class="back" title="Nach links"></button><div class="thumb widethumb"></div><button type="button" class="fwd" title="Nach rechts"></button></div>
  </div>
  <div class="sheettabs">
    <button type="button">Knoten</button><button type="button">Linien</button><button type="button">Materialien</button><button type="button" class="cur">Flächen</button><button type="button">Volumenkörper</button><button type="button">Öffnungen</button><button type="button">Knotenlager</button><button type="button">Linienlager</button><button type="button">Flächenlager</button><button type="button">Liniengelenke</button><button type="button">Querschnitte</button><button type="button">Stabendgelenke</button><button type="button">Stabexzentrizitäten</button>
    <div class="pager">
      <button type="button" disabled title="Erste"><svg viewBox="0 0 10 10"><path d="M2 2v6M8 2L4 5l4 3z" fill="#aaa" stroke="#aaa"/></svg></button>
      <button type="button" disabled title="Zurück"><svg viewBox="0 0 10 10"><path d="M6 2L3 5l3 3z" fill="#aaa"/></svg></button>
      <button type="button" title="Weiter"><svg viewBox="0 0 10 10"><path d="M3 1l4 4-4 4z"/></svg></button>
      <button type="button" title="Letzte"><svg viewBox="0 0 10 10"><path d="M2 1l4 4-4 4zM7 1h2v8H7z"/></svg></button>
    </div>
  </div>
</section>
</main>
</div>

<footer class="status">
  <span class="msg">Fläche Nr. 16 des Typs 'NURBS'</span>
  <button type="button">FANG</button><button type="button">RASTER</button><button type="button">KARTES</button><button type="button">OFANG</button><button type="button">HLINIEN</button><button type="button">DXF</button>
  <span class="cell grow"></span><span class="cell"></span><span class="cell"></span><span class="cell"></span><span class="cell"></span>
  <svg class="sizer" viewBox="0 0 10 10"><path d="M8 1h1M5 4h1M8 4h1M2 7h1M5 7h1M8 7h1" stroke="#6d7480" stroke-width="2"/></svg>
</footer>
</div>
</div>
</body>
</html>
```

FILE: styles.css
```css
* { box-sizing: border-box; }
html, body { height: 100%; margin: 0; }
body { background: #fff; font-family: "Open Sans", "Noto Sans", sans-serif; font-size: 9px; color: #1a1a1a; }
button { margin: 0; padding: 0; border: 0; background: none; font: inherit; color: inherit; display: block; }
h1, h2 { margin: 0; font-size: inherit; font-weight: normal; }
ul { margin: 0; padding: 0; list-style: none; }
.defs { position: absolute; width: 0; height: 0; }
symbol path:not([fill]) { fill: none; }
.i16 { width: 14px; height: 14px; }
.i14 { width: 14px; height: 12px; }

.window { height: 100vh; display: flex; flex-direction: column; padding: 0 5px 5px; border: 1px solid #30343c; border-radius: 7px 7px 4px 4px; background: linear-gradient(#a9cdf3, #b9daf9 20px, #bcdcfb 50%, #b5d9fb); }
.titlebar { display: flex; align-items: center; height: 22px; gap: 3px; background: linear-gradient(90deg, #e4f1fd, #c6e2fc 180px, #a9cef2 450px, #b5dafb 75%, #a8cdf2); margin: 0 -5px; padding-left: 5px; border-radius: 6px 6px 0 0; }
.titlebar h1 { flex: 1; color: #111; font-size: 10px; }
.winbtns { display: flex; align-self: flex-start; margin-right: 5px; border: 1px solid #4c5765; border-top: 0; border-radius: 0 0 4px 4px; overflow: hidden; }
.winbtns button { height: 14px; width: 22px; background: linear-gradient(#d6e4f2, #c0d2e6 50%, #9fb5cf 50%, #c0d9ee); border-right: 1px solid #5e6b7b; }
.winbtns .shut { width: 37px; border: 0; background: linear-gradient(#e6a393, #d36a54 50%, #b93a1f 50%, #d97b56); }
.winbtns svg { width: 12px; height: 10px; display: block; margin: auto; }

.client { flex: 1; min-height: 0; display: flex; flex-direction: column; border: 1px solid #6f7a8a; background: #ced3de; }

.menubar { display: flex; align-items: center; height: 20px; padding-left: 2px; background: #cfd3dc; }
.menubar a { color: #45484f; text-decoration: none; margin-left: 10px; }
.menubar svg + a { margin-left: 8px; }
.menubar .i14 { margin-left: 2px; }
.mdi { display: flex; gap: 3px; margin-left: auto; padding-right: 2px; }
.mdi svg { width: 10px; height: 10px; display: block; }

.grip { width: 3px; height: 13px; background: repeating-linear-gradient(#8f97a5 0 1px, transparent 1px 3px); border-right: 1px solid #eef0f5; flex: none; }
.sep { width: 1px; height: 12px; background: #a9b0bd; margin: 0 2px; flex: none; }

.toolrow { display: flex; height: 20px; }
.toolbar { display: flex; align-items: center; justify-content: space-between; background: linear-gradient(#eceff7, #dde1ec 60%, #d5dae6); border-radius: 0 3px 3px 0; padding-left: 2px; min-width: 0; border-bottom: 1px solid #c3c8d4; }
.toolbar button { width: 17px; height: 17px; flex: none; border: 1px solid transparent; }
.toolbar svg { width: 14px; height: 14px; display: block; margin: auto; }
.toolbar .on { background: linear-gradient(#fde3b8, #fbc474); border-color: #d9a766; }
.toolbar .drop { width: 10px; }
.toolbar .drop::after { content: ""; display: block; margin: auto; width: 0; border: 2px solid transparent; border-top: 3px solid #666; border-bottom: 0; }
.main { flex: 682 1 0; padding-right: 3px; }
.addons { flex: 79 1 0; padding-right: 2px; }
.cad { flex: 257 1 0; padding-right: 3px; margin-right: 7px; }
.insert { flex: 500 1 0; }
.view { flex: 243 1 0; padding-right: 2px; }
.results { flex: 276 1 0; margin-right: 4px; }
.loadcase { flex: 1; margin: 0 3px 0 13px; height: 15px; min-width: 60px; border: 1px solid #a5abb6; appearance: none; background: linear-gradient(45deg, transparent 50%, #555 50%) no-repeat right 7px center / 3px 3px, linear-gradient(-45deg, transparent 50%, #555 50%) no-repeat right 4px center / 3px 3px, #efefef; }

.work { flex: 1; min-height: 0; display: flex; }
.navigator { width: 231px; display: flex; flex-direction: column; }
.panelhead { display: flex; align-items: center; height: 15px; padding: 0 3px 0 2px; gap: 4px; background: #b8bfca; color: #3f444d; flex: none; }
.panelhead h2 { flex: 1; }
.panelhead svg { display: block; width: 9px; height: 9px; }

.treebox { flex: 1; min-height: 0; margin: 2px 0 0 1px; padding-bottom: 2px; border: 1px solid #8d95a2; border-left-color: #dfe3ea; background: #fcfcf5; display: flex; flex-direction: column; }
.treeview { flex: 1; min-height: 0; display: flex; }
.tree { flex: 1; min-width: 0; overflow: hidden; display: grid; grid-auto-rows: 1fr; }
.tree li { display: flex; align-items: center; white-space: nowrap; line-height: 12px; min-height: 0; background-repeat: no-repeat; background-size: 1px 100%; color: #111; }
.tree svg { flex: none; width: 12px; height: 11px; margin-right: 3px; }
.tree .wide { width: 14px; height: 12px; margin-right: 3px; }
.tree .bold { font-weight: bold; }
.tree .l0 { padding-left: 2px; }
.tree .l1 { padding-left: 4px; }
.tree .l2 { padding-left: 19px; }
.tree .l3 { padding-left: 34px; background-image: linear-gradient(#c0c0bb, #c0c0bb), linear-gradient(#c0c0bb, #c0c0bb); background-position: 23px 0, 38px 0; }
.tree .l4 { padding-left: 49px; background-image: linear-gradient(#c0c0bb, #c0c0bb), linear-gradient(#c0c0bb, #c0c0bb), linear-gradient(#c0c0bb, #c0c0bb); background-position: 23px 0, 38px 0, 53px 0; }
.tree .l4.last { background-size: 1px 100%, 1px 100%, 1px 50%; }
.tree i { flex: none; width: 9px; height: 1px; margin: 0 1px 0 5px; background: #c0c0bb; }
.exp { flex: none; position: relative; width: 7px; height: 7px; margin: 0 7px 0 1px; border: 1px solid #9aa0ac; background: linear-gradient(#234a8c, #234a8c) center / 3px 1px no-repeat, #fff; }
.exp.plus { background: linear-gradient(#234a8c, #234a8c) center / 3px 1px no-repeat, linear-gradient(#234a8c, #234a8c) center / 1px 3px no-repeat, #fff; }
.exp::after { content: ""; position: absolute; left: 6px; top: 2px; width: 6px; height: 1px; background: #c0c0bb; }

.vscroll { width: 13px; flex: none; display: flex; flex-direction: column; background: #ededed; }
.hscroll { height: 13px; flex: none; display: flex; background: #ededed; }
.vscroll button { height: 13px; }
.hscroll button { width: 13px; }
.vscroll button::after, .hscroll button::after { content: ""; display: block; width: 0; height: 0; margin: auto; border: 3px solid transparent; }
.vscroll .down { margin-top: auto; }
.hscroll .fwd { margin-left: auto; }
.vscroll .up::after { border-bottom-color: #444; border-top: 0; }
.vscroll .down::after { border-top-color: #444; border-bottom: 0; }
.hscroll .back::after { border-right-color: #444; border-left: 0; }
.hscroll .fwd::after { border-left-color: #444; border-right: 0; }
.thumb { border: 1px solid #999; border-radius: 1px; display: flex; align-items: center; justify-content: center; }
.vscroll .thumb { background: linear-gradient(90deg, #f6f6f6, #d8d8da); }
.hscroll .thumb { background: linear-gradient(#f6f6f6, #d2d2d4); }
.thumb::after { content: ""; width: 6px; height: 6px; background: repeating-linear-gradient(90deg, #666 0 1px, transparent 1px 2px); }
.vscroll .thumb::after { background: repeating-linear-gradient(#666 0 1px, transparent 1px 2px); }
.treethumb { height: 243px; }
.navthumb { width: 94px; margin-left: 2px; }
.sheetthumb { height: 28px; }
.widethumb { width: 85%; margin-left: 2px; }

.navtabs { display: flex; height: 17px; margin-left: 2px; gap: 3px; color: #3f444d; flex: none; }
.navtabs button { display: flex; align-items: center; gap: 2px; height: 16px; padding: 0 3px 0 1px; border-radius: 0 0 3px 3px; }
.navtabs .cur { background: #e6eaf2; border: 1px solid #f5f7fa; border-top: 0; }
.navtabs svg { width: 12px; height: 11px; }

main { flex: 1; min-width: 0; display: flex; flex-direction: column; padding-left: 5px; }
.model { flex: 1; min-height: 0; position: relative; background: #fcfcfc; border: 1px solid #777e89; border-right: 0; border-bottom: 0; }
.scene { display: block; width: 100%; height: 100%; }
.axisline { stroke: #6aa3a3; }
.edge { fill: none; stroke: #3a3a60; stroke-dasharray: 5 1; }
.solidline { fill: none; stroke: #2a2a55; stroke-dasharray: 4 1; }
.hidden { fill: none; stroke: #6464b4; }
.teal { fill: none; stroke: #1d8286; stroke-width: 1.3; }
.dots { fill: none; stroke: #0a7d14; stroke-width: 3; stroke-linecap: round; stroke-dasharray: 0 6; }
.dots.faint { stroke: #4a8fa8; }
.dots.red { stroke: #7a0a2a; }
.knots { fill: none; stroke: #7a0a2a; stroke-width: 3; stroke-linecap: round; }
.pick { fill: none; stroke: #ff3c6e; stroke-dasharray: 7 2; }
.axes path { stroke-width: 1.5; marker-end: url(#ar); }
.axisname { font: 9px "Open Sans", sans-serif; text-anchor: middle; }
.tooltip { position: absolute; left: 57%; top: 43%; height: 16px; padding: 0 3px; border: 1px solid #777; border-radius: 2px; line-height: 14px; background: linear-gradient(#fff, #e4e5f0); color: #575757; box-shadow: 2px 2px 2px #0006; white-space: nowrap; }

.tablepane { flex: none; background: #f0eeee; padding-bottom: 12px; margin-top: 6px; }
.tabletools { height: 20px; justify-content: flex-start; padding-left: 6px; border-radius: 0; }
.tabletools .sep { margin: 0 3px; }
.tabletools .fx { font: italic 12px "Liberation Serif", serif; line-height: 13px; color: #555; white-space: nowrap; }
.fx b { color: #d33; font-size: 9px; vertical-align: 3px; }
.sheet { border: 1px solid #8c929c; border-top: 2px solid #777; background: #f0f0f0; padding: 1px 2px 3px 1px; }
.sheetbody { display: flex; margin-bottom: 5px; }
.sheet, .sheettabs, .status { font-family: "Liberation Sans", sans-serif; font-size: 9px; }
table { flex: 1 1 0; width: 100%; min-width: 0; table-layout: fixed; border-collapse: collapse; background: #fff; line-height: 12px; }
th, td { padding: 0; height: 13px; overflow: hidden; white-space: nowrap; }
td { border: 1px solid #b4b4b4; padding: 0 3px; }
thead th { font-weight: normal; background: #f0f0f0; height: 12px; border-left: 1px solid #b4b4b4; }
.letters th { background: #e4e4e4; border: 1px solid #8a8a8a; height: 11px; line-height: 10px; }
.letters .corner { line-height: 12px; }
tbody th { font-weight: normal; background: #e1e1e1; border: 1px solid #8a8a8a; }
.letters th.sel, tbody th.sel { background: #3296fc; color: #fff; }
th small { font-size: 8px; }
sup { font-size: 7px; line-height: 7px; }
.g { background: #f0f0f0; }
.n { text-align: right; }
.ro { color: #808080; }
.col { padding-left: 14px; }
.col::before { content: ""; float: left; width: 8px; height: 10px; margin-left: -14px; border: 1px solid #555; }
.col.blue::before { background: #6298fc; }
.col.violet::before { background: #8c84fb; }
.col.gold::before { background: #fdc200; }
.col.mat { padding-left: 12px; text-align: center; }
.col.mat::before { margin-left: -12px; background: #6464fb; }
.focus span { display: block; margin-right: -2px; line-height: 12px; outline: 1px dotted #222; outline-offset: -1px; }
.c0 { width: 36px; } .ca { width: 70px; } .cb { width: 81px; } .cc { width: 128px; } .cd { width: 43px; } .ce { width: 61px; } .cf { width: 52px; } .cg { width: 57px; } .ch { width: 57px; } .ci { width: 57px; } .cj { width: 61px; } .ck { width: 61px; } .cl { width: 9px; }

.sheettabs { display: flex; height: 15px; background: #f0eeee; }
.sheettabs > button { height: 14px; padding: 0 2px 0 1px; border: 1px solid #888; border-top: 0; border-radius: 0 0 4px 3px; background: #e9e9e9; white-space: nowrap; line-height: 12px; }
.sheettabs > button + button { border-left: 0; }
.sheettabs > .cur { background: #fff; padding: 0 3px; }
.pager { margin-left: auto; display: flex; }
.pager button { width: 12px; height: 13px; border: 1px solid #c5c5c5; background: #f5f5f5; }
.pager svg { display: block; width: 9px; height: 9px; }

.status { display: flex; align-items: center; height: 17px; flex: none; background: linear-gradient(#c9cdd5, #a9afbb 60%, #b9bfca); padding-left: 3px; color: #2b2f36; }
.msg { width: 435px; }
.status button { height: 14px; padding: 0 1px 0 0; margin-right: 1px; border: 1px solid #4b505a; border-width: 1px 0 0 2px; border-right: 1px solid #dde; background: #b5bac5; }
.cell { width: 58px; height: 14px; border-left: 1px solid #8e95a2; }
.grow { flex: 1; }
.status .sizer { width: 10px; height: 10px; align-self: flex-end; }
```
